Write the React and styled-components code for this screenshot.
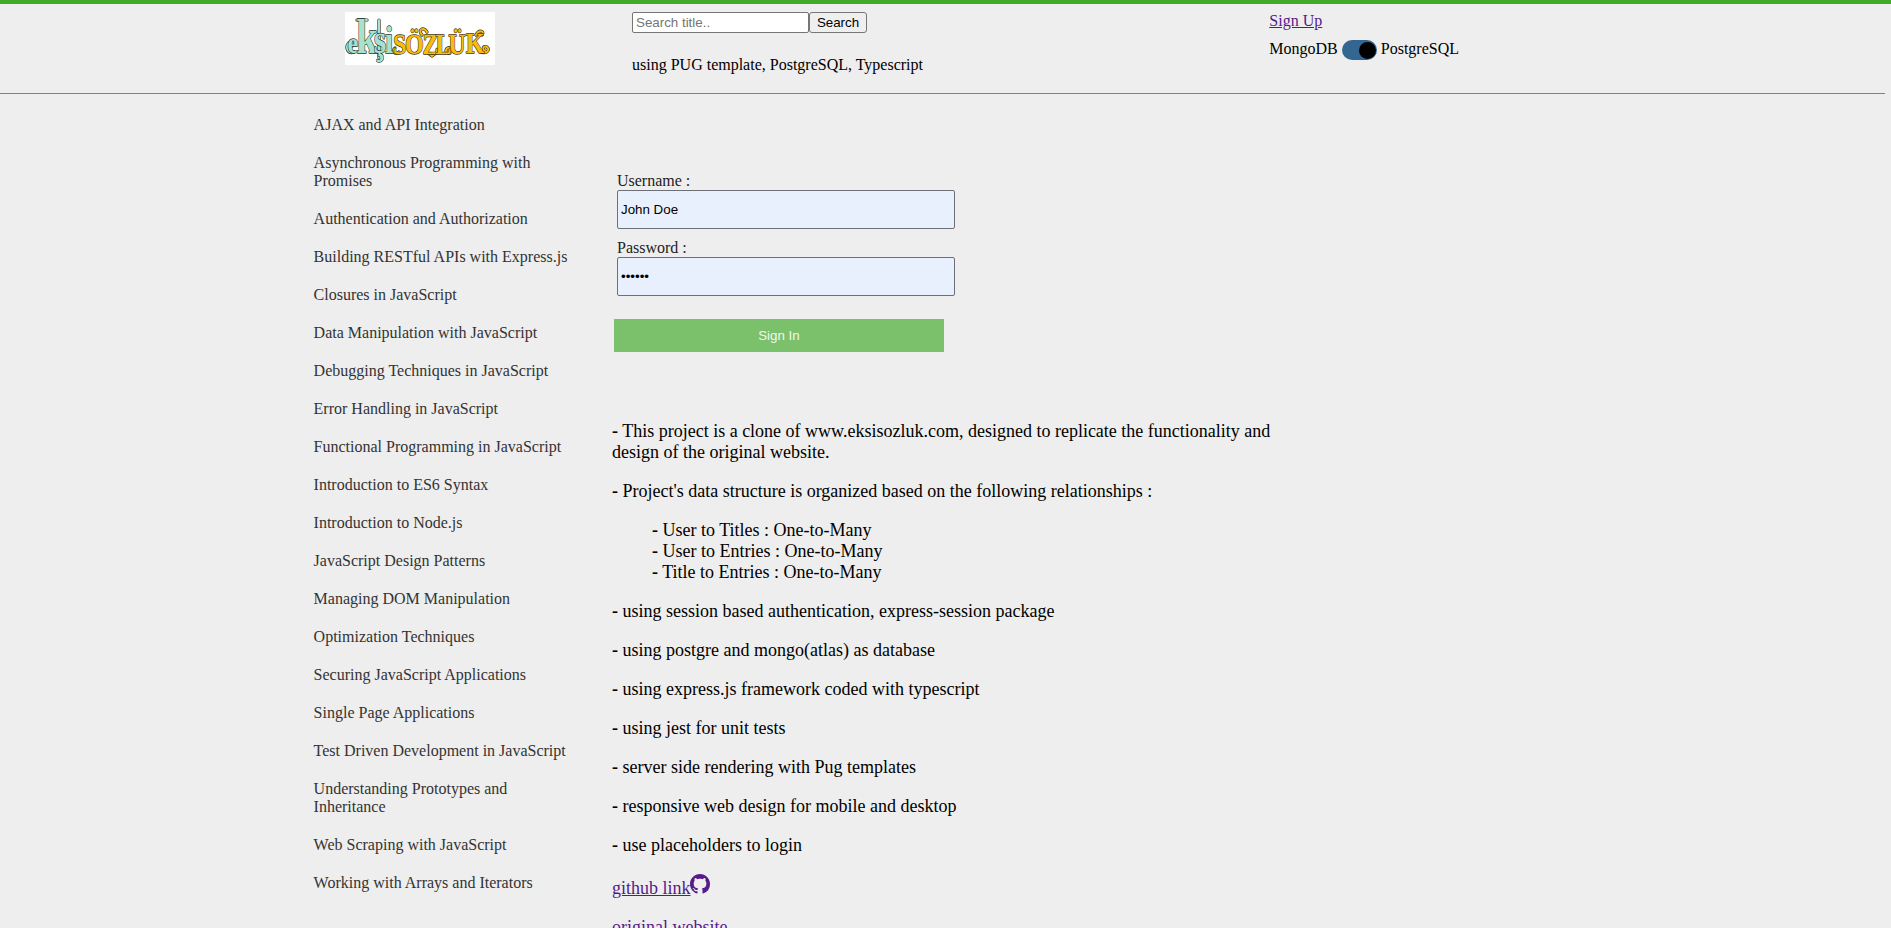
import React from "react";
import styled, { createGlobalStyle } from "styled-components";

const GlobalStyle = createGlobalStyle`
  * { box-sizing: border-box; }
  body {
    margin: 0;
    background: #eeeeee;
    color: #000;
    font: 16px/18px "Liberation Serif", "Times New Roman", serif;
    overflow: hidden;
  }
`;

const Page = styled.div`
  height: 928px;
  overflow: hidden;
  border-top: 4px solid #43a929;
`;

const Header = styled.header`
  display: flex;
  width: 1885px;
  height: 90px;
  padding: 8px 0 0 345px;
  border-bottom: 1px solid #808080;
`;

const LogoLink = styled.a`
  display: block;
  width: 287px;
`;

const LogoArt = styled.svg`
  display: block;
  width: 150px;
  height: 53px;
  background: #fff;
`;

const SearchColumn = styled.div`
  width: 637.3px;
`;

const SearchForm = styled.form`
  display: flex;
  height: 21px;
`;

const SearchInput = styled.input`
  width: 177px;
  height: 21px;
  padding: 1px 3px;
  border: 1px solid #767676;
  border-radius: 2px;
  background: #fff;
  font: 13.333px "Liberation Sans", Arial, sans-serif;
  &::placeholder { color: #757575; }
`;

const SearchButton = styled.button`
  width: 58px;
  height: 21px;
  padding: 0;
  border: 1px solid #767676;
  border-radius: 3px;
  background: #efefef;
  color: #000;
  font: 13.333px "Liberation Sans", Arial, sans-serif;
`;

const Tagline = styled.p`
  margin: 23px 0 0;
`;

const Account = styled.div`
  display: flex;
  flex-direction: column;
  align-items: flex-start;
  gap: 10px;
`;

const Link = styled.a`
  color: #551a8b;
  text-decoration: underline;
`;

const DatabaseSwitch = styled.label`
  display: flex;
  align-items: flex-start;
  gap: 4px;
  height: 20px;
`;

const Track = styled.span`
  display: flex;
  align-items: center;
  justify-content: flex-end;
  width: 35px;
  height: 20px;
  padding-right: 1px;
  border-radius: 10px;
  background: #336791;
`;

const Knob = styled.span`
  width: 17px;
  height: 17px;
  border-radius: 50%;
  background: #000;
`;

const Columns = styled.div`
  display: flex;
  padding-left: 313.6px;
`;

const TitleList = styled.nav`
  display: flex;
  flex-direction: column;
  gap: 20px;
  width: 260.4px;
  margin-right: 38px;
  padding-top: 22px;
`;

const TitleLink = styled.a`
  color: #333;
`;

const Main = styled.main`
  width: 670px;
  padding-top: 78px;
`;

const SignInForm = styled.form`
  display: flex;
  flex-direction: column;
  padding-left: 5px;
`;

const Field = styled.label`
  display: flex;
  flex-direction: column;
  margin-bottom: 10px;
  color: #222;
`;

const FieldInput = styled.input`
  width: 338px;
  height: 39px;
  padding: 1px 3px;
  border: 1px solid #6d7078;
  border-radius: 2px;
  background: #e8f0fe;
  color: #000;
  font: 13.333px "Liberation Sans", Arial, sans-serif;
`;

const SignInButton = styled.button`
  width: 330px;
  height: 33px;
  margin: 13px 0 0 -3px;
  padding: 0;
  border: 0;
  background: #7bc16c;
  color: #f0f8ee;
  font: 13.333px "Liberation Sans", Arial, sans-serif;
`;

const About = styled.section`
  margin-top: 69px;
  font-size: 18px;
  line-height: 21px;
`;

const Paragraph = styled.p`
  margin: 0 0 18px;
  padding-left: ${(p) => (p.$indent ? "40px" : "0")};
`;

const Line = styled.span`
  display: block;
`;

const GithubIcon = styled.svg`
  width: 20px;
  height: 20px;
  margin-left: -0.6px;
  vertical-align: baseline;
  fill: #551a8b;
`;

const titles = [
  "AJAX and API Integration",
  "Asynchronous Programming with Promises",
  "Authentication and Authorization",
  "Building RESTful APIs with Express.js",
  "Closures in JavaScript",
  "Data Manipulation with JavaScript",
  "Debugging Techniques in JavaScript",
  "Error Handling in JavaScript",
  "Functional Programming in JavaScript",
  "Introduction to ES6 Syntax",
  "Introduction to Node.js",
  "JavaScript Design Patterns",
  "Managing DOM Manipulation",
  "Optimization Techniques",
  "Securing JavaScript Applications",
  "Single Page Applications",
  "Test Driven Development in JavaScript",
  "Understanding Prototypes and Inheritance",
  "Web Scraping with JavaScript",
  "Working with Arrays and Iterators",
];

const relations = [
  "User to Titles : One-to-Many",
  "User to Entries : One-to-Many",
  "Title to Entries : One-to-Many",
];

const features = [
  "using session based authentication, express-session package",
  "using postgre and mongo(atlas) as database",
  "using express.js framework coded with typescript",
  "using jest for unit tests",
  "server side rendering with Pug templates",
  "responsive web design for mobile and desktop",
  "use placeholders to login",
];

const MINT = "#a5e3d0";
const GOLD = "#f7bd0e";

function Flourish({ d, color }) {
  return (
    <g fill="none" strokeLinecap="round" strokeLinejoin="round">
      <path d={d} stroke="#2b2a1c" strokeWidth="3.2" />
      <path d={d} stroke={color} strokeWidth="2" />
    </g>
  );
}

function Logo() {
  return (
    <LogoArt viewBox="0 0 150 53" aria-label="ekşi sözlük">
      <Flourish color={MINT} d="M9 40 C1 43 0 32 5 30 C9 29 9 35 5 35" />
      <Flourish color={MINT} d="M12 8 H22 M34 8 V46" />
      <Flourish color={GOLD} d="M50 36 C46 39 51 44 54 40" />
      <Flourish color={GOLD} d="M77 23 C72 18 79 14 82 20 M83 41 L87 44 L91 41" />
      <Flourish color={GOLD} d="M106 36 C100 34 99 42 105 41" />
      <Flourish color={GOLD} d="M134 38 C140 44 146 38 142 35 C138 33 137 38 140 39" />
      <Flourish color={GOLD} d="M131 23 C134 17 140 19 137 23" />
      <g
        fontFamily="Liberation Serif"
        fontWeight="bold"
        paintOrder="stroke"
        strokeWidth="1.3"
        strokeLinejoin="round"
        transform="scale(.8 1)"
      >
        <text y="41" fill={MINT} stroke="#20352d">
          <tspan x="3" fontSize="30">e</tspan>
          <tspan x="14" fontSize="48">k</tspan>
          <tspan x="36" fontSize="40">ş</tspan>
          <tspan x="50" fontSize="37">i</tspan>
        </text>
        <text
          x="60 75 97 113 129 151"
          y="42 42 42 42 42 41"
          fontSize="30"
          fill={GOLD}
          stroke="#4a3508"
        >
          SÖZLÜK
        </text>
      </g>
    </LogoArt>
  );
}

function App() {
  return (
    <Page>
      <GlobalStyle />
      <Header>
        <LogoLink><Logo /></LogoLink>
        <SearchColumn>
          <SearchForm>
            <SearchInput placeholder="Search title.." />
            <SearchButton type="button">Search</SearchButton>
          </SearchForm>
          <Tagline>using PUG template, PostgreSQL, Typescript</Tagline>
        </SearchColumn>
        <Account>
          <Link href="#">Sign Up</Link>
          <DatabaseSwitch>
            <span>MongoDB</span>
            <Track><Knob /></Track>
            <span>PostgreSQL</span>
          </DatabaseSwitch>
        </Account>
      </Header>
      <Columns>
        <TitleList>
          {titles.map((title) => <TitleLink key={title}>{title}</TitleLink>)}
        </TitleList>
        <Main>
          <SignInForm>
            <Field>
              Username :
              <FieldInput defaultValue="John Doe" />
            </Field>
            <Field>
              Password :
              <FieldInput type="password" defaultValue="secret" />
            </Field>
            <SignInButton type="button">Sign In</SignInButton>
          </SignInForm>
          <About>
            <Paragraph>
              <b>-</b> This project is a clone of www.eksisozluk.com, designed to
              replicate the functionality and design of the original website.
            </Paragraph>
            <Paragraph>
              <b>-</b> Project's data structure is organized based on the following
              relationships :
            </Paragraph>
            <Paragraph $indent>
              {relations.map((text) => (
                <Line key={text}><b>-</b> {text}</Line>
              ))}
            </Paragraph>
            {features.map((text) => (
              <Paragraph key={text}><b>-</b> {text}</Paragraph>
            ))}
            <Paragraph>
              <Link href="#">
                github link
                <GithubIcon viewBox="0 0 16 16" aria-hidden="true">
                  <path d="M8 0C3.58 0 0 3.58 0 8c0 3.54 2.29 6.53 5.47 7.59.4.07.55-.17.55-.38 0-.19-.01-.82-.01-1.49-2.01.37-2.53-.49-2.69-.94-.09-.23-.48-.94-.82-1.13-.28-.15-.68-.52-.01-.53.63-.01 1.08.58 1.23.82.72 1.21 1.87.87 2.33.66.07-.52.28-.87.51-1.07-1.78-.2-3.64-.89-3.64-3.95 0-.87.31-1.59.82-2.15-.08-.2-.36-1.02.08-2.12 0 0 .67-.21 2.2.82.64-.18 1.32-.27 2-.27s1.36.09 2 .27c1.53-1.04 2.2-.82 2.2-.82.44 1.1.16 1.92.08 2.12.51.56.82 1.27.82 2.15 0 3.07-1.87 3.75-3.65 3.95.29.25.54.73.54 1.48 0 1.07-.01 1.93-.01 2.2 0 .21.15.46.55.38A8.01 8.01 0 0 0 16 8c0-4.42-3.58-8-8-8z" />
                </GithubIcon>
              </Link>
            </Paragraph>
            <Paragraph><Link href="#">original website</Link></Paragraph>
          </About>
        </Main>
      </Columns>
    </Page>
  );
}

export default App;
